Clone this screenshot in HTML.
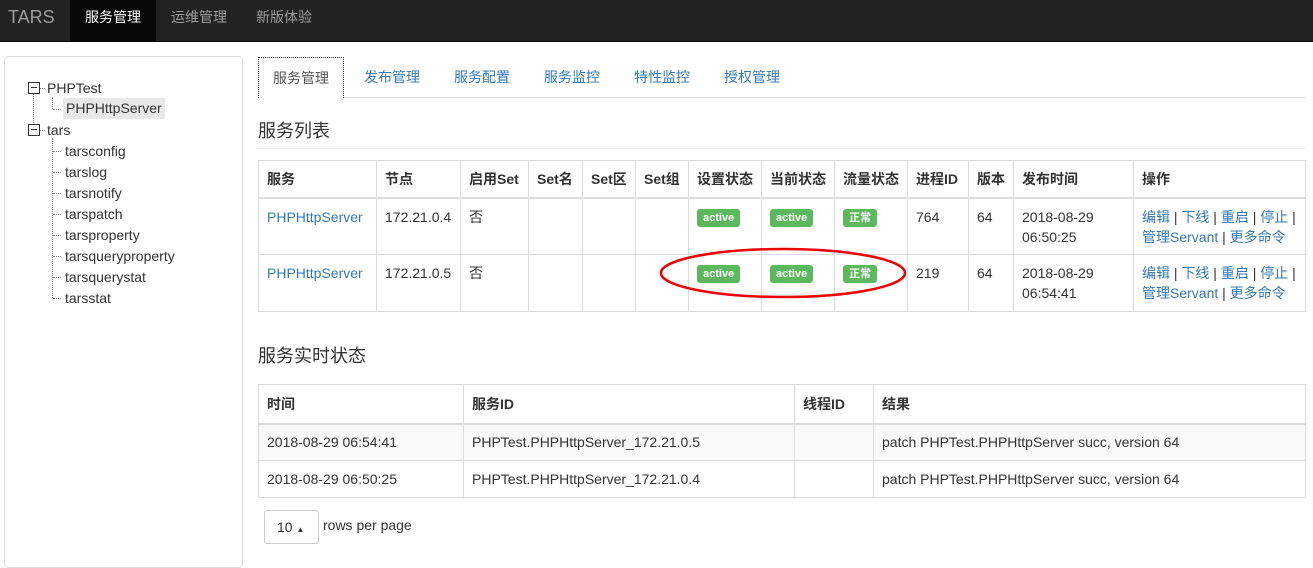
<!DOCTYPE html><html><head><meta charset="utf-8"><style>
body{margin:0;width:1313px;height:556px;overflow:hidden;background:#fff;font-family:"Liberation Sans","Noto Sans CJK SC",sans-serif;font-size:14px;color:#333;position:relative}
.nav{position:absolute;left:0;top:0;width:1313px;height:41px;background:#222;border-bottom:1px solid #080808}
.nav span{position:absolute;top:0;height:41px;line-height:34px;color:#9d9d9d;font-size:14px}
.side{position:absolute;left:4px;top:56px;width:237px;height:510px;border:1px solid #ddd;border-radius:4px}
.t{position:absolute;font-size:14px;color:#333;line-height:17px}
.box{position:absolute;width:10px;height:10px;border:1px solid #333;background:#fff}
.box:after{content:"";position:absolute;left:2px;top:4px;width:6px;height:1px;background:#333}
.vl{position:absolute;border-left:1px dotted #888}
.hl{position:absolute;border-top:1px dotted #888;width:8px}
.tabs{position:absolute;left:258px;top:57px;width:1047px;height:40px;border-bottom:1px solid #ddd}
.tabs span{position:absolute;top:0;height:40px;line-height:40px;color:#337ab7}
.tabs .a{border:1px dotted #333;border-bottom:none;color:#555;background:#fff;height:40px;padding:0 14px;left:0}
h3{position:absolute;margin:0;font-weight:normal;font-size:18px;color:#333}
table{position:absolute;border-collapse:collapse;table-layout:fixed;left:258px}
td,th{border:1px solid #ddd;padding:0 8px;text-align:left;vertical-align:top;white-space:nowrap;overflow:hidden}
th{font-weight:bold;vertical-align:middle}
a{color:#337ab7;text-decoration:none}
.lb{display:inline-block;background:#5cb85c;color:#fff;font-size:11px;font-weight:bold;padding:2px 6px;border-radius:3px;line-height:14px;margin-top:10px}
</style></head><body>
<div class="nav">
<span style="left:8px;font-size:18px;line-height:34px">TARS</span>
<span style="left:70px;width:86px;background:#080808;color:#fff;text-align:center">服务管理</span>
<span style="left:171px">运维管理</span>
<span style="left:256px">新版体验</span>
</div>
<div class="side"></div>
<div class="vl" style="left:33px;top:93px;height:30px"></div>
<div class="vl" style="left:52px;top:97px;height:12px"></div><div class="hl" style="left:53px;top:109px"></div>
<div class="vl" style="left:52px;top:138px;height:160px"></div>
<div class="box" style="left:28px;top:82px"></div><div class="hl" style="left:40px;top:88px;width:5px"></div>
<div class="t" style="left:47px;top:80px">PHPTest</div>
<div class="t" style="left:63px;top:98px;background:#e8e8e8;padding:2px 3px">PHPHttpServer</div>
<div class="box" style="left:28px;top:124px"></div><div class="hl" style="left:40px;top:130px;width:5px"></div>
<div class="t" style="left:47px;top:122px">tars</div>
<div class="hl" style="left:53px;top:151px"></div><div class="t" style="left:65px;top:143px">tarsconfig</div>
<div class="hl" style="left:53px;top:172px"></div><div class="t" style="left:65px;top:164px">tarslog</div>
<div class="hl" style="left:53px;top:193px"></div><div class="t" style="left:65px;top:185px">tarsnotify</div>
<div class="hl" style="left:53px;top:214px"></div><div class="t" style="left:65px;top:206px">tarspatch</div>
<div class="hl" style="left:53px;top:235px"></div><div class="t" style="left:65px;top:227px">tarsproperty</div>
<div class="hl" style="left:53px;top:256px"></div><div class="t" style="left:65px;top:248px">tarsqueryproperty</div>
<div class="hl" style="left:53px;top:277px"></div><div class="t" style="left:65px;top:269px">tarsquerystat</div>
<div class="hl" style="left:53px;top:298px"></div><div class="t" style="left:65px;top:290px">tarsstat</div>
<div class="tabs">
<span class="a">服务管理</span>
<span style="left:106px">发布管理</span>
<span style="left:196px">服务配置</span>
<span style="left:286px">服务监控</span>
<span style="left:376px">特性监控</span>
<span style="left:466px">授权管理</span>
</div>
<h3 style="left:258px;top:117px">服务列表</h3>
<div style="position:absolute;left:258px;top:148px;width:1047px;border-top:1px solid #eee"></div>
<table style="top:160px;width:1047px">
<colgroup><col style="width:118px"><col style="width:84px"><col style="width:68px"><col style="width:54px"><col style="width:53px"><col style="width:53px"><col style="width:73px"><col style="width:73px"><col style="width:73px"><col style="width:61px"><col style="width:45px"><col style="width:120px"><col style="width:172px"></colgroup>
<tr style="height:37px;border-bottom:2px solid #ddd"><th>服务</th><th>节点</th><th>启用Set</th><th>Set名</th><th>Set区</th><th>Set组</th><th>设置状态</th><th>当前状态</th><th>流量状态</th><th>进程ID</th><th>版本</th><th>发布时间</th><th>操作</th></tr>
<tr style="height:57px;line-height:20px"><td style="padding-top:8px"><a>PHPHttpServer</a></td><td style="padding-top:8px">172.21.0.4</td><td style="padding-top:8px">否</td><td></td><td></td><td></td><td><span class="lb">active</span></td><td><span class="lb">active</span></td><td><span class="lb">正常</span></td><td style="padding-top:8px">764</td><td style="padding-top:8px">64</td><td style="padding-top:8px">2018-08-29<br>06:50:25</td><td style="padding-top:8px"><a>编辑</a> | <a>下线</a> | <a>重启</a> | <a>停止</a> |<br><a>管理Servant</a> | <a>更多命令</a></td></tr>
<tr style="height:57px;line-height:20px"><td style="padding-top:8px"><a>PHPHttpServer</a></td><td style="padding-top:8px">172.21.0.5</td><td style="padding-top:8px">否</td><td></td><td></td><td></td><td><span class="lb">active</span></td><td><span class="lb">active</span></td><td><span class="lb">正常</span></td><td style="padding-top:8px">219</td><td style="padding-top:8px">64</td><td style="padding-top:8px">2018-08-29<br>06:54:41</td><td style="padding-top:8px"><a>编辑</a> | <a>下线</a> | <a>重启</a> | <a>停止</a> |<br><a>管理Servant</a> | <a>更多命令</a></td></tr>
</table>
<svg style="position:absolute;left:655px;top:243px" width="260" height="60"><ellipse cx="128" cy="30" rx="122" ry="24" fill="none" stroke="#e00" stroke-width="2.5"/></svg>
<h3 style="left:258px;top:342px">服务实时状态</h3>
<table style="top:384px;width:1047px">
<colgroup><col style="width:205px"><col style="width:331px"><col style="width:79px"><col style="width:432px"></colgroup>
<tr style="height:39px;border-bottom:2px solid #ddd"><th>时间</th><th>服务ID</th><th>线程ID</th><th>结果</th></tr>
<tr style="height:37px;background:#f9f9f9"><td style="vertical-align:middle">2018-08-29 06:54:41</td><td style="vertical-align:middle">PHPTest.PHPHttpServer_172.21.0.5</td><td></td><td style="vertical-align:middle">patch PHPTest.PHPHttpServer succ, version 64</td></tr>
<tr style="height:37px"><td style="vertical-align:middle">2018-08-29 06:50:25</td><td style="vertical-align:middle">PHPTest.PHPHttpServer_172.21.0.4</td><td></td><td style="vertical-align:middle">patch PHPTest.PHPHttpServer succ, version 64</td></tr>
</table>
<div style="position:absolute;left:264px;top:510px;width:53px;height:32px;border:1px solid #ccc;border-radius:3px;line-height:32px;text-indent:12px">10 <span style="font-size:8px">▲</span></div>
<div style="position:absolute;left:323px;top:517px">rows per page</div>
</body></html>
